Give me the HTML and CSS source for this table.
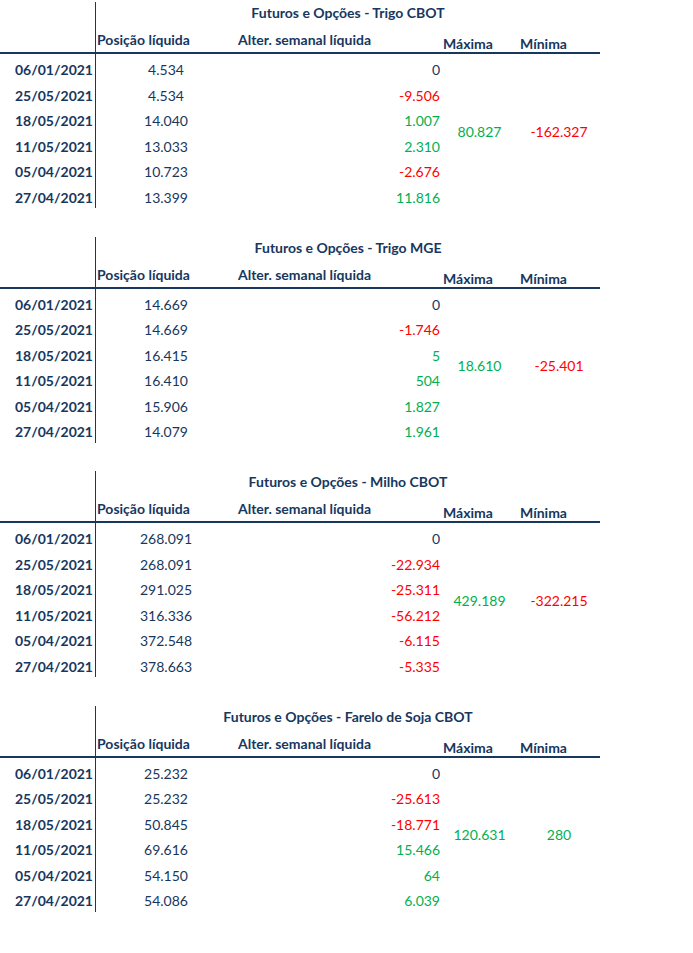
FILE: index.html
```html
<!DOCTYPE html>
<html lang="pt">
<head>
<meta charset="utf-8">
<title>Futuros e Opções</title>
<link rel="stylesheet" href="styles.css">
</head>
<body>
<section class="tbl">
  <div class="top">
    <div class="title">Futuros e Opções - Trigo CBOT</div>
    <div class="heads">
      <span class="h h-pos">Posição líquida</span>
      <span class="h h-alt">Alter. semanal líquida</span>
      <span class="h h-max">Máxima</span>
      <span class="h h-min">Mínima</span>
    </div>
  </div>
  <div class="rule"></div>
  <div class="body">
    <div class="dates">
      <div class="date">06/01/2021</div>
      <div class="date">25/05/2021</div>
      <div class="date">18/05/2021</div>
      <div class="date">11/05/2021</div>
      <div class="date">05/04/2021</div>
      <div class="date">27/04/2021</div>
    </div>
    <div class="grid">
      <div class="max g">80.827</div>
      <div class="min r">-162.327</div>
      <div class="pos">4.534</div><div class="alt">0</div>
      <div class="pos">4.534</div><div class="alt r">-9.506</div>
      <div class="pos">14.040</div><div class="alt g">1.007</div>
      <div class="pos">13.033</div><div class="alt g">2.310</div>
      <div class="pos">10.723</div><div class="alt r">-2.676</div>
      <div class="pos">13.399</div><div class="alt g">11.816</div>
    </div>
  </div>
</section>

<section class="tbl">
  <div class="top">
    <div class="title">Futuros e Opções - Trigo MGE</div>
    <div class="heads">
      <span class="h h-pos">Posição líquida</span>
      <span class="h h-alt">Alter. semanal líquida</span>
      <span class="h h-max">Máxima</span>
      <span class="h h-min">Mínima</span>
    </div>
  </div>
  <div class="rule"></div>
  <div class="body">
    <div class="dates">
      <div class="date">06/01/2021</div>
      <div class="date">25/05/2021</div>
      <div class="date">18/05/2021</div>
      <div class="date">11/05/2021</div>
      <div class="date">05/04/2021</div>
      <div class="date">27/04/2021</div>
    </div>
    <div class="grid">
      <div class="max g">18.610</div>
      <div class="min r">-25.401</div>
      <div class="pos">14.669</div><div class="alt">0</div>
      <div class="pos">14.669</div><div class="alt r">-1.746</div>
      <div class="pos">16.415</div><div class="alt g">5</div>
      <div class="pos">16.410</div><div class="alt g">504</div>
      <div class="pos">15.906</div><div class="alt g">1.827</div>
      <div class="pos">14.079</div><div class="alt g">1.961</div>
    </div>
  </div>
</section>

<section class="tbl">
  <div class="top">
    <div class="title">Futuros e Opções - Milho CBOT</div>
    <div class="heads">
      <span class="h h-pos">Posição líquida</span>
      <span class="h h-alt">Alter. semanal líquida</span>
      <span class="h h-max">Máxima</span>
      <span class="h h-min">Mínima</span>
    </div>
  </div>
  <div class="rule"></div>
  <div class="body">
    <div class="dates">
      <div class="date">06/01/2021</div>
      <div class="date">25/05/2021</div>
      <div class="date">18/05/2021</div>
      <div class="date">11/05/2021</div>
      <div class="date">05/04/2021</div>
      <div class="date">27/04/2021</div>
    </div>
    <div class="grid">
      <div class="max g">429.189</div>
      <div class="min r">-322.215</div>
      <div class="pos">268.091</div><div class="alt">0</div>
      <div class="pos">268.091</div><div class="alt r">-22.934</div>
      <div class="pos">291.025</div><div class="alt r">-25.311</div>
      <div class="pos">316.336</div><div class="alt r">-56.212</div>
      <div class="pos">372.548</div><div class="alt r">-6.115</div>
      <div class="pos">378.663</div><div class="alt r">-5.335</div>
    </div>
  </div>
</section>

<section class="tbl">
  <div class="top">
    <div class="title">Futuros e Opções - Farelo de Soja CBOT</div>
    <div class="heads">
      <span class="h h-pos">Posição líquida</span>
      <span class="h h-alt">Alter. semanal líquida</span>
      <span class="h h-max">Máxima</span>
      <span class="h h-min">Mínima</span>
    </div>
  </div>
  <div class="rule"></div>
  <div class="body">
    <div class="dates">
      <div class="date">06/01/2021</div>
      <div class="date">25/05/2021</div>
      <div class="date">18/05/2021</div>
      <div class="date">11/05/2021</div>
      <div class="date">05/04/2021</div>
      <div class="date">27/04/2021</div>
    </div>
    <div class="grid">
      <div class="max g">120.631</div>
      <div class="min g">280</div>
      <div class="pos">25.232</div><div class="alt">0</div>
      <div class="pos">25.232</div><div class="alt r">-25.613</div>
      <div class="pos">50.845</div><div class="alt r">-18.771</div>
      <div class="pos">69.616</div><div class="alt g">15.466</div>
      <div class="pos">54.150</div><div class="alt g">64</div>
      <div class="pos">54.086</div><div class="alt g">6.039</div>
    </div>
  </div>
</section>
</body>
</html>
```

FILE: styles.css
```css
html, body {
  margin: 0;
  background: #ffffff;
}
body {
  padding-top: 2px;
  font-family: Lato, "Liberation Sans", sans-serif;
  font-size: 14px;
  color: #17375e;
}
.tbl {
  width: 600px;
  height: 234.67px;
}
.top {
  margin-left: 95px;
  border-left: 1px solid #17375e;
  height: 50px;
}
.title {
  height: 24px;
  line-height: 22px;
  text-align: center;
  font-weight: bold;
}
.heads {
  display: grid;
  grid-template-columns: 140px 205px 77px 82px;
  height: 26px;
}
.h {
  font-weight: bold;
  line-height: 16px;
  padding-left: 2px;
  white-space: nowrap;
}
.h-pos { padding-left: 1px; }
.h-pos, .h-alt {
  align-self: start;
  margin-top: 6px;
}
.h-max, .h-min {
  align-self: end;
}
.rule {
  height: 2px;
  background: #17375e;
}
.body {
  display: flex;
}
.dates {
  width: 95px;
  padding-top: 3px;
}
.date {
  height: 25.5px;
  line-height: 25.5px;
  text-align: right;
  padding-right: 2px;
  font-weight: bold;
}
.grid {
  border-left: 1px solid #17375e;
  padding-top: 3px;
  height: 151px;
  display: grid;
  grid-template-columns: 140px 205px 77px 82px;
  grid-auto-rows: 25.5px;
}
.pos {
  grid-column: 1;
  text-align: center;
  line-height: 25.5px;
}
.alt {
  grid-column: 2;
  text-align: right;
  padding-right: 1px;
  line-height: 25.5px;
}
.max, .min {
  grid-row: 1 / span 6;
  align-self: center;
  text-align: center;
  margin-bottom: 5px;
}
.max { grid-column: 3; }
.min { grid-column: 4; }
.g { color: #00b050; }
.r { color: #ff0000; }
```
